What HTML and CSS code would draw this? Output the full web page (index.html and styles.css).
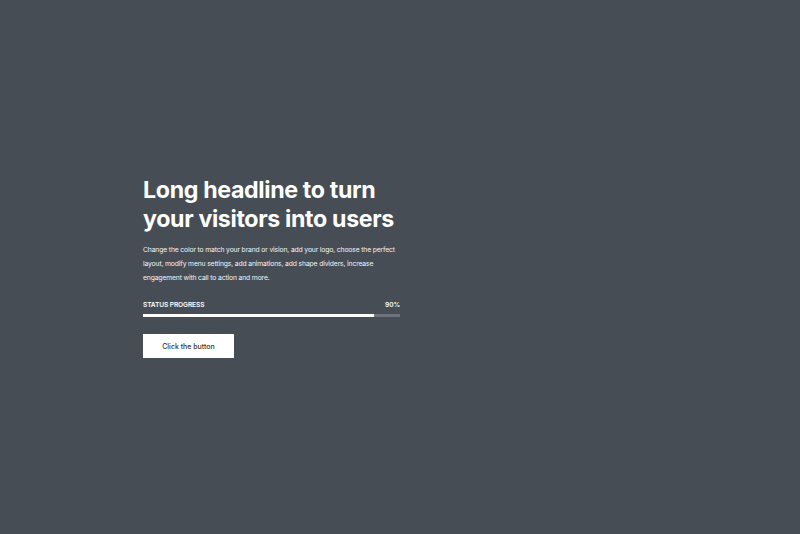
FILE: index.html
```html
<!DOCTYPE html>
<html>
<head>
<meta charset="utf-8">
<link rel="stylesheet" href="styles.css">
</head>
<body>
<main class="hero">
  <section class="content">
    <h1 class="title">Long headline to turn<br>your visitors into users</h1>
    <p class="lead">Change the color to match your brand or vision, add your logo, choose the perfect layout, modify menu settings, add animations, add shape dividers, increase engagement with call to action and more.</p>
    <div class="progress">
      <div class="progress-head">
        <span class="progress-label">STATUS PROGRESS</span>
        <span class="progress-value">90%</span>
      </div>
      <div class="track"><div class="fill" style="width:90%"></div></div>
    </div>
    <button class="btn">Click the button</button>
  </section>
</main>
</body>
</html>
```

FILE: styles.css
```css
html, body {
  margin: 0;
  padding: 0;
}
body {
  background: #474d55;
  font-family: Inter, "Noto Sans", sans-serif;
  color: #fff;
  width: 800px;
  height: 534px;
  overflow: hidden;
}
.hero {
  height: 534px;
  display: flex;
  align-items: flex-start;
  padding-top: 176px;
  padding-left: 143px;
  box-sizing: border-box;
}
.content {
  width: 257px;
  display: flex;
  flex-direction: column;
}
.title {
  margin: 0;
  font-size: 23.2px;
  font-weight: 700;
  line-height: 29px;
  letter-spacing: -0.35px;
  white-space: nowrap;
}
.lead {
  margin: 9px 0 0;
  font-size: 6.8px;
  line-height: 14px;
  letter-spacing: -0.15px;
  width: 252px;
  color: #f3f4f5;
}
.progress {
  margin-top: 15px;
}
.progress-head {
  display: flex;
  justify-content: space-between;
  font-size: 6.6px;
  font-weight: 600;
  line-height: 10px;
  letter-spacing: -0.1px;
}
.track {
  margin-top: 4px;
  height: 3px;
  background: #6e737b;
}
.fill {
  height: 100%;
  background: #fff;
}
.btn {
  margin-top: 17px;
  width: 91px;
  height: 24px;
  background: #fff;
  border: none;
  padding: 0;
  font-family: Inter, "Noto Sans", sans-serif;
  font-size: 7px;
  font-weight: 500;
  color: #333;
  cursor: pointer;
}
```
